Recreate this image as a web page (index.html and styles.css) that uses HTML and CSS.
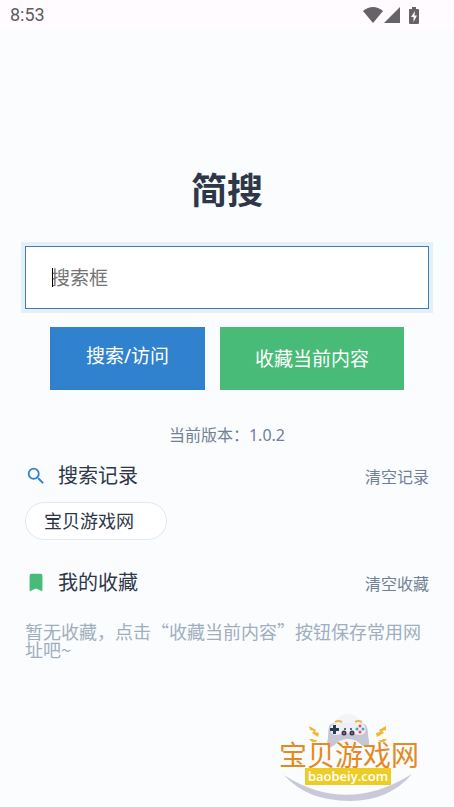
FILE: index.html
```html
<!DOCTYPE html>
<html lang="zh-CN">
<head>
<meta charset="utf-8">
<meta name="viewport" content="width=device-width, initial-scale=1">
<title>简搜</title>
<link rel="stylesheet" href="styles.css">
</head>
<body>
<header class="status">
  <time>8:53</time>
  <div class="status-icons">
    <svg width="20" height="16" viewBox="0 0 20 16" aria-hidden="true"><path d="M0 4Q10-4 20 4L10 16Z"/></svg>
    <svg width="16" height="16" viewBox="0 0 16 16" aria-hidden="true"><path d="M0 16L16 0V16Z"/></svg>
    <svg class="battery" width="10" height="17" viewBox="0 0 10 17" aria-hidden="true"><path d="M3 0H7V2H9Q10 2 10 3V16Q10 17 9 17H1Q0 17 0 16V3Q0 2 1 2H3Z"/><path class="bolt" d="M6 4L2 10H4.500V15L8 8.500H5.500Z"/></svg>
  </div>
</header>
<main class="page">
  <h1>简搜</h1>
  <form class="search">
    <div class="field">
      <input class="query" type="text" aria-label="搜索框" placeholder="搜索框">
      <span class="caret"></span>
    </div>
    <div class="actions">
      <button class="btn btn-search" type="button">搜索/访问</button>
      <button class="btn btn-save" type="button">收藏当前内容</button>
    </div>
  </form>
  <p class="version">当前版本：1.0.2</p>
  <section>
    <div class="head">
      <svg width="22" height="22" viewBox="0 0 24 24" aria-hidden="true"><path fill="#3182ce" d="M15.500 14h-.79l-.28-.27A6.470 6.470 0 0 0 16 9.500 6.500 6.500 0 1 0 9.500 16c1.610 0 3.090-.59 4.230-1.570l.27.28v.79l5 4.990L20.490 19zM9.500 14a4.500 4.500 0 1 1 0-9 4.500 4.500 0 0 1 0 9z"/></svg>
      <h2>搜索记录</h2>
      <button class="clear" type="button">清空记录</button>
    </div>
    <button class="tag" type="button">宝贝游戏网</button>
  </section>
  <section class="favorites">
    <div class="head">
      <svg width="22" height="22" viewBox="0 0 24 24" aria-hidden="true"><path fill="#48bb78" d="M17 2H7a2 2 0 0 0-2 2v17l7-3 7 3V4a2 2 0 0 0-2-2z"/></svg>
      <h2>我的收藏</h2>
      <button class="clear" type="button">清空收藏</button>
    </div>
    <p class="empty">暂无收藏，点击“收藏当前内容”按钮保存常用网址吧~</p>
  </section>
</main>
<svg class="watermark" width="142" height="94" viewBox="0 0 142 94" role="img" aria-label="宝贝游戏网 baobeiy.com">
  <circle cx="70" cy="17" r="16" fill="#f3f4f5"/>
  <path d="M6 62Q68 102 134 61Q111 88 72 88Q29 88 6 62Z" fill="#c9cad9"/>
  <path d="M57 9q3-2 7 0M77 9q3-2 7 0" fill="none" stroke="#e6b94f" stroke-width="2"/>
  <path d="M58 10H82C92 10 89 20 91 27Q92 34 88 34Q85 34 79 28Q70 24 61 28Q54 35 51 34Q48 33 50 25C51 16 49 10 58 10Z" fill="#c6c6d4"/>
  <path d="M58 10H82C89 10 90 22 82 22Q70 19 58 22C50 22 51 10 58 10Z" fill="#eeeef4"/>
  <g fill="#293c55"><path d="M55 12h3v3h3v3h-3v3h-3v-3h-3v-3h3z"/><circle cx="67" cy="16" r="1"/><circle cx="73" cy="16" r="1"/><circle cx="66" cy="20" r="2.500"/><circle cx="74" cy="20" r="2.500"/></g>
  <g fill="#de5261"><circle cx="66" cy="20" r="1"/><circle cx="74" cy="20" r="1"/><circle cx="82" cy="13" r="1.500"/><circle cx="82" cy="19" r="1.500"/></g>
  <g fill="#44a7bd"><circle cx="79" cy="16" r="1.500"/><circle cx="85" cy="16" r="1.500"/></g>
  <path d="M31 13L38 17L37 19L41 20L40 24L34 20L36 18L32 17ZM108 13L101 17L102 19L98 20L99 24L106 20L104 18L108 17ZM31 26L35 26L36 27L39 27L38 29L34 29L33 28ZM109 26L105 26L104 27L101 27L102 29L106 29L107 28Z" fill="#f3b62d"/>
  <text class="mark-name" x="71" y="53">宝贝游戏网</text>
  <rect x="27" y="55" width="86" height="17" fill="#edcd25"/>
  <text class="mark-url" x="70" y="68">baobeiy.com</text>
</svg>
</body>
</html>
```
FILE: styles.css
```css
* { box-sizing: border-box; }

body {
  margin: 0;
  min-height: 100vh;
  display: flex;
  flex-direction: column;
  background: #fafcfe;
  color: #2d3748;
  font-family: "Noto Sans", "Noto Sans CJK SC", sans-serif;
}

h1, h2, p { margin: 0; }

button {
  font-family: inherit;
  border: 0;
  padding: 0;
  cursor: pointer;
}

.status {
  height: 30px;
  padding: 0 35px 0 10px;
  display: flex;
  align-items: center;
  justify-content: space-between;
  background: #fffbfe;
  color: #5f5d61;
  font: 400 18px/30px Roboto, sans-serif;
}

.status-icons {
  display: flex;
  align-items: center;
  gap: 1px;
  fill: #656367;
}

.battery { margin-left: 8px; }
.bolt { fill: #fffbfe; }

.page {
  padding: 133px 25px 0;
}

h1 {
  font-size: 36px;
  line-height: 56px;
  text-align: center;
}

.field {
  position: relative;
  margin-top: 27px;
}

.query {
  display: block;
  width: 100%;
  height: 63px;
  padding: 0 25px;
  border: 1px solid #3f7db5;
  border-radius: 0;
  outline: 4px solid #e5eff8;
  background: #fff;
  color: #2d3748;
  font-family: inherit;
  font-size: 19px;
}

.query::placeholder { color: #757575; }

.caret {
  position: absolute;
  top: 22px;
  left: 27px;
  width: 1px;
  height: 19px;
  background: #000;
}

.actions {
  display: flex;
  gap: 15px;
  margin: 18px 25px 0;
}

.btn {
  height: 63px;
  padding-bottom: 2px;
  color: #fff;
  font-size: 19px;
}

.btn-search {
  flex: 155;
  padding-bottom: 8px;
  background: #3182ce;
}

.btn-save {
  flex: 184;
  background: #48bb78;
}

.version {
  margin-top: 33px;
  color: #718096;
  font-size: 16px;
  line-height: 24px;
  text-align: center;
}

.head {
  display: flex;
  align-items: center;
  height: 30px;
  margin-top: 14px;
}

h2 {
  margin-left: 11px;
  font-size: 20px;
  font-weight: 400;
  line-height: 30px;
}

.clear {
  margin-left: auto;
  background: none;
  color: #718096;
  font-size: 16px;
}

.tag {
  display: block;
  height: 38px;
  margin-top: 11px;
  padding: 0 32px 2px 18px;
  border: 1px solid #e2e8f0;
  border-radius: 19px;
  background: #fff;
  color: #2d3748;
  font-size: 18px;
}

.favorites { margin-top: 28px; }

.empty {
  margin-top: 24px;
  color: #a0aec0;
  font-family: "Noto Sans CJK SC", sans-serif;
  font-size: 18px;
  line-height: 18px;
}

.watermark {
  margin: auto 34px 0 auto;
  flex: none;
}

.mark-name {
  fill: #e48a22;
  font-size: 28px;
  text-anchor: middle;
}

.mark-url {
  fill: #fff;
  font: 600 13px "Open Sans", sans-serif;
  text-anchor: middle;
}
```
